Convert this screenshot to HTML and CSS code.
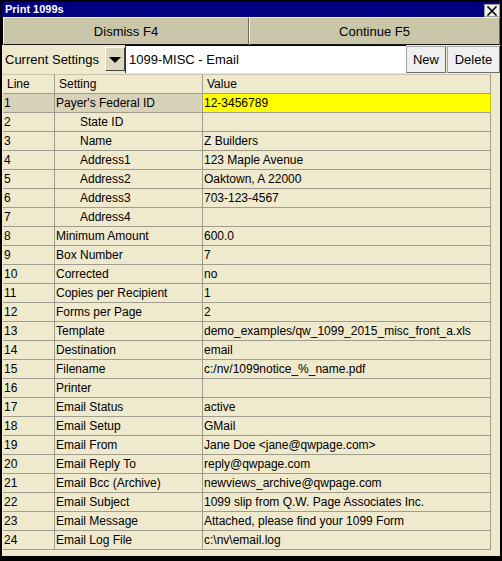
FILE: index.html
```html
<!DOCTYPE html>
<html>
<head>
<meta charset="utf-8">
<link rel="stylesheet" href="styles.css">
</head>
<body>
<div class="window">
  <div class="frame">
    <div class="titlebar">
      <span class="title">Print 1099s</span>
      <span class="close">
        <svg width="12" height="10" viewBox="0 0 12 10"><path d="M1.5 0.5 L10.5 9.5 M10.5 0.5 L1.5 9.5" stroke="#000" stroke-width="1.6" fill="none"/></svg>
      </span>
    </div>
    <div class="actions">
      <div class="bigbtn dismiss">Dismiss F4</div>
      <div class="bigbtn cont">Continue F5</div>
    </div>
    <div class="settingsbar">
      <div class="label">Current Settings</div>
      <div class="dropbtn"><span class="tri"></span></div>
      <div class="input">1099-MISC - Email</div>
      <div class="smallbtn new">New</div>
      <div class="smallbtn del">Delete</div>
    </div>
    <div class="grid">
      <div class="row head">
        <div class="c line">Line</div><div class="c set">Setting</div><div class="c val">Value</div>
      </div>
      <div class="row sel"><div class="c line">1</div><div class="c set">Payer's Federal ID</div><div class="c val yellow">12-3456789</div></div>
      <div class="row"><div class="c line">2</div><div class="c set ind">State ID</div><div class="c val"></div></div>
      <div class="row"><div class="c line">3</div><div class="c set ind">Name</div><div class="c val">Z Builders</div></div>
      <div class="row"><div class="c line">4</div><div class="c set ind">Address1</div><div class="c val">123 Maple Avenue</div></div>
      <div class="row"><div class="c line">5</div><div class="c set ind">Address2</div><div class="c val">Oaktown, A 22000</div></div>
      <div class="row"><div class="c line">6</div><div class="c set ind">Address3</div><div class="c val">703-123-4567</div></div>
      <div class="row"><div class="c line">7</div><div class="c set ind">Address4</div><div class="c val"></div></div>
      <div class="row"><div class="c line">8</div><div class="c set">Minimum Amount</div><div class="c val">600.0</div></div>
      <div class="row"><div class="c line">9</div><div class="c set">Box Number</div><div class="c val">7</div></div>
      <div class="row"><div class="c line">10</div><div class="c set">Corrected</div><div class="c val">no</div></div>
      <div class="row"><div class="c line">11</div><div class="c set">Copies per Recipient</div><div class="c val">1</div></div>
      <div class="row"><div class="c line">12</div><div class="c set">Forms per Page</div><div class="c val">2</div></div>
      <div class="row"><div class="c line">13</div><div class="c set">Template</div><div class="c val">demo_examples/qw_1099_2015_misc_front_a.xls</div></div>
      <div class="row"><div class="c line">14</div><div class="c set">Destination</div><div class="c val">email</div></div>
      <div class="row"><div class="c line">15</div><div class="c set">Filename</div><div class="c val">c:/nv/1099notice_%_name.pdf</div></div>
      <div class="row"><div class="c line">16</div><div class="c set">Printer</div><div class="c val"></div></div>
      <div class="row"><div class="c line">17</div><div class="c set">Email Status</div><div class="c val">active</div></div>
      <div class="row"><div class="c line">18</div><div class="c set">Email Setup</div><div class="c val">GMail</div></div>
      <div class="row"><div class="c line">19</div><div class="c set">Email From</div><div class="c val">Jane Doe &lt;jane@qwpage.com&gt;</div></div>
      <div class="row"><div class="c line">20</div><div class="c set">Email Reply To</div><div class="c val">reply@qwpage.com</div></div>
      <div class="row"><div class="c line">21</div><div class="c set">Email Bcc (Archive)</div><div class="c val">newviews_archive@qwpage.com</div></div>
      <div class="row"><div class="c line">22</div><div class="c set">Email Subject</div><div class="c val">1099 slip from Q.W. Page Associates Inc.</div></div>
      <div class="row"><div class="c line">23</div><div class="c set">Email Message</div><div class="c val">Attached, please find your 1099 Form</div></div>
      <div class="row"><div class="c line">24</div><div class="c set">Email Log File</div><div class="c val">c:\nv\email.log</div></div>
    </div>
  </div>
</div>
</body>
</html>
```

FILE: styles.css
```css
html, body {
  margin: 0;
  padding: 0;
  background: #000;
}
.window {
  width: 502px;
  height: 561px;
  box-sizing: border-box;
  padding: 2px 2px 5px 2px;
  background: #000;
  font-family: "Liberation Sans", Arial, sans-serif;
  color: #000;
}
.frame {
  height: 100%;
  background: #efe9ce;
  display: flex;
  flex-direction: column;
}
.titlebar {
  height: 15px;
  background: #000080;
  display: flex;
  align-items: center;
  justify-content: space-between;
  padding-left: 3px;
}
.title {
  color: #fff;
  font-weight: bold;
  font-size: 11px;
  line-height: 15px;
}
.close {
  width: 14px;
  height: 11px;
  background: #f0f0f0;
  border: 1px solid #9a9a9a;
  display: flex;
  align-items: center;
  justify-content: center;
  margin-top: 2px;
}
.actions {
  display: flex;
  height: 28px;
  padding-left: 1px;
  background: #000;
}
.bigbtn {
  background: #cac6aa;
  border-top: 1px solid #f2f0e4;
  border-left: 1px solid #f2f0e4;
  border-right: 1px solid #6c6a5a;
  border-bottom: 1px solid #1a1a1a;
  box-sizing: border-box;
  display: flex;
  align-items: center;
  justify-content: center;
  font-size: 13px;
}
.dismiss { width: 246px; }
.cont { flex: 1; }
.settingsbar {
  height: 28px;
  display: flex;
  align-items: stretch;
  padding-left: 1px;
}
.label {
  width: 102px;
  font-size: 13px;
  display: flex;
  align-items: center;
  padding-left: 2px;
  box-sizing: border-box;
}
.dropbtn {
  width: 20px;
  margin: 2px 0;
  background: #dcd7bd;
  border-top: 1px solid #fff;
  border-left: 1px solid #fff;
  border-right: 1px solid #444;
  border-bottom: 1px solid #444;
  box-sizing: border-box;
  display: flex;
  align-items: center;
  justify-content: center;
}
.tri {
  width: 0;
  height: 0;
  border-left: 6px solid transparent;
  border-right: 6px solid transparent;
  border-top: 6px solid #000;
  margin-top: 1px;
}
.input {
  width: 281px;
  background: #fff;
  border-top: 1px solid #000;
  border-left: 1px solid #333;
  box-sizing: border-box;
  font-size: 13px;
  display: flex;
  align-items: center;
  padding-left: 3px;
}
.smallbtn {
  background: #f0f0f0;
  border: 1px solid #a8a8a8;
  border-right-color: #707070;
  border-bottom-color: #707070;
  box-sizing: border-box;
  font-size: 13px;
  display: flex;
  align-items: center;
  justify-content: center;
  margin-top: 1px;
}
.new { width: 40px; }
.del { width: 53px; margin-left: 1px; }
.grid {
  padding-left: 1px;
  margin-top: 1px;
  display: flex;
  flex-direction: column;
}
.row {
  display: grid;
  grid-template-columns: 52px 148px 288px;
  height: 19px;
  font-size: 12px;
}
.row.head {
  height: 20px;
}
.c {
  border-right: 1px solid #9f9d8e;
  border-bottom: 1px solid #9f9d8e;
  display: flex;
  align-items: center;
  padding-left: 1px;
  white-space: nowrap;
  overflow: hidden;
  box-sizing: border-box;
}
.head .c {
  padding-left: 4px;
  border-top: 1px solid #c9c5ad;
}
.c.ind { padding-left: 25px; }
.sel .c { background: #d7d2b8; }
.sel .c.yellow {
  background: #ffff00;
  border-right-color: #c8c400;
}
```
